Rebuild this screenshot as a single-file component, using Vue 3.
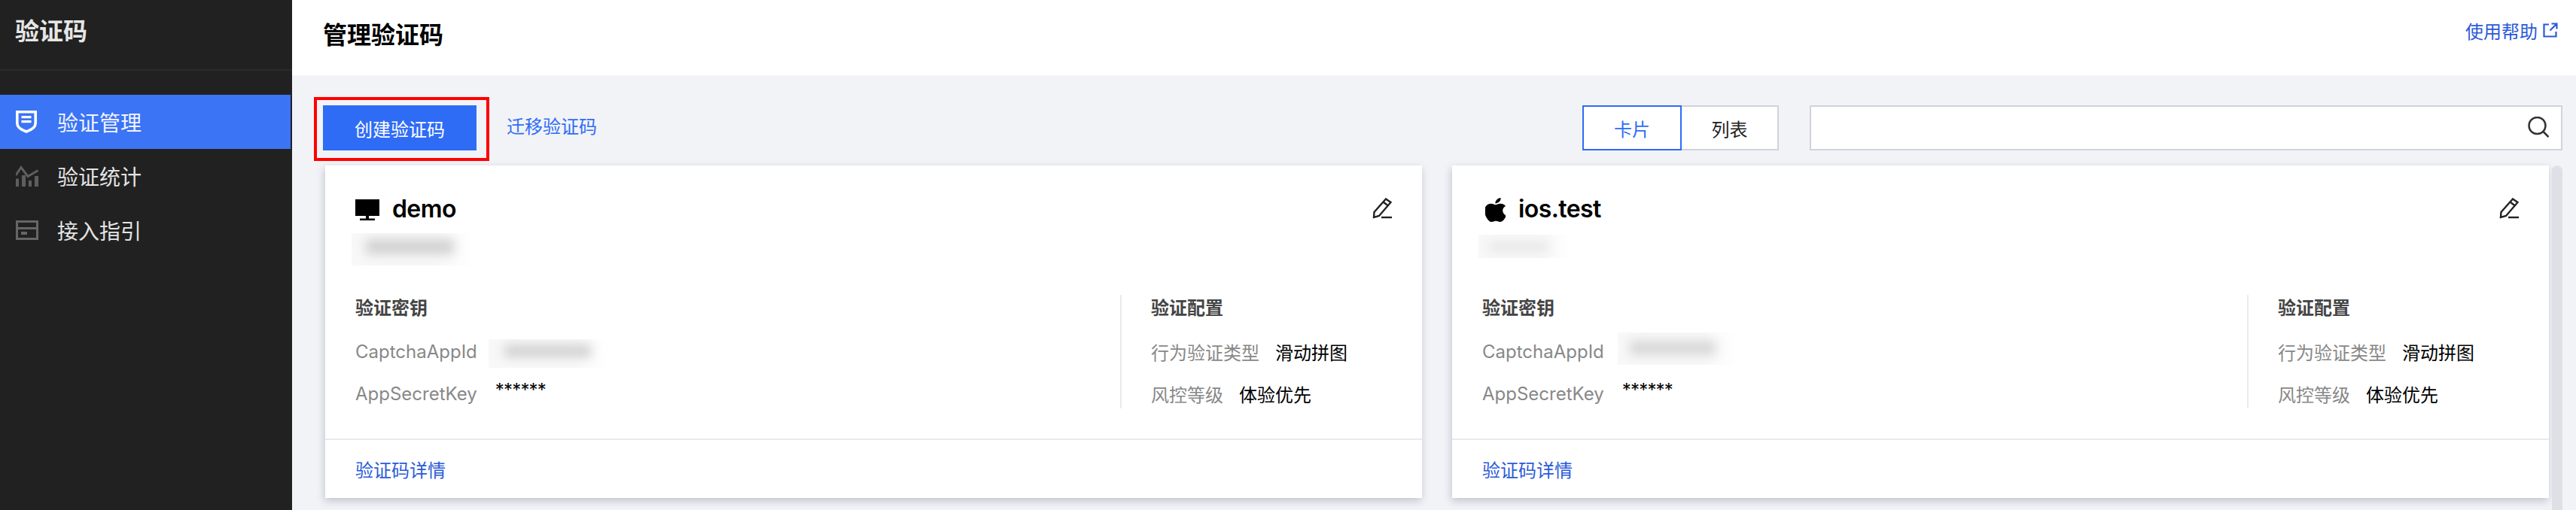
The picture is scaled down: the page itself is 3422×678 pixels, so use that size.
<script setup>
const nav = [
  { label: '验证管理', icon: 'shield', active: true },
  { label: '验证统计', icon: 'chart' },
  { label: '接入指引', icon: 'guide' }
]
const cards = [
  { name: 'demo', icon: 'monitor', sub: 'sub-a', app: 'app-a' },
  { name: 'ios.test', icon: 'apple', sub: 'sub-b', app: 'app-b' }
]
</script>

<template>
  <div class="page">
    <aside class="side">
      <div class="brand">验证码</div>
      <nav class="nav">
        <a v-for="n in nav" :key="n.label" class="nav-item" :class="{ active: n.active }">
          <span class="nav-ico">
            <svg v-if="n.icon === 'shield'" width="28" height="30" viewBox="0 0 28 30">
              <path fill="none" stroke="#fff" stroke-width="3.600" d="M1.800 1.800h24.400v15c0 5-5 8.800-12.200 11.200C6.800 25.600 1.800 21.800 1.800 16.800z" />
              <path fill="#fff" d="M7.500 7h13v3.200h-13zM7.500 13h13v3.200h-13z" />
            </svg>
            <svg v-else-if="n.icon === 'chart'" width="30" height="28" viewBox="0 0 30 28">
              <path fill="none" stroke="#5e5e5e" stroke-width="3" d="M0 13 7 2.500l9 12 13.500-8" />
              <path fill="#5e5e5e" d="M0 17.500h4V28H0zM8 13h5v15H8zM17 20h4v8h-4zM25 14h5v14h-5z" />
            </svg>
            <svg v-else width="30" height="26" viewBox="0 0 30 26">
              <path fill="#666" fill-rule="evenodd" d="M0 0h30v26H0zM3 3v6h24V3zm0 9v11h24V12zm4 3h8v4H7z" />
            </svg>
          </span>
          <span class="nav-label">{{ n.label }}</span>
        </a>
      </nav>
    </aside>

    <main class="main">
      <header class="top">
        <h1>管理验证码</h1>
        <a class="help">使用帮助
          <svg width="20" height="20" viewBox="0 0 20 20" fill="none" stroke="#2a5ad8" stroke-width="2.200">
            <path d="M8 2.500H1.500v16h16V12" />
            <path d="M11.500 1.500h7v7M18.500 1.500l-9 9" />
          </svg>
        </a>
      </header>

      <section class="body">
        <div class="tools">
          <div class="highlight">
            <button class="primary">创建验证码</button>
          </div>
          <a class="migrate">迁移验证码</a>
          <div class="seg">
            <span class="seg-on">卡片</span>
            <span class="seg-off">列表</span>
          </div>
          <div class="search">
            <svg width="30" height="30" viewBox="0 0 30 30" fill="none" stroke="#333" stroke-width="2.500">
              <circle cx="14.500" cy="12" r="11" />
              <path d="m22.500 20 7 7" />
            </svg>
          </div>
        </div>

        <div class="scroller">
          <div class="grid">
            <article v-for="c in cards" :key="c.name" class="card">
              <div class="card-top">
                <div class="title">
                  <svg v-if="c.icon === 'monitor'" class="ico-mon" width="32" height="28" viewBox="0 0 32 28">
                    <path d="M0 0h32v22H0zM14 22h4v3.500h-4zM6 25.500h20V28H6z" fill="#000" />
                  </svg>
                  <svg v-else class="ico-apple" width="27" height="32" viewBox="2.900 0 18.200 24" preserveAspectRatio="none">
                    <path fill="#000" d="M12.152 6.896c-.948 0-2.415-1.078-3.960-1.040-2.040.027-3.910 1.183-4.961 3.014-2.117 3.675-.546 9.103 1.519 12.090 1.013 1.454 2.208 3.090 3.792 3.039 1.520-.065 2.090-.987 3.935-.987 1.831 0 2.350.987 3.960.948 1.637-.026 2.676-1.480 3.676-2.948 1.156-1.688 1.636-3.325 1.662-3.415-.039-.013-3.182-1.221-3.220-4.857-.026-3.040 2.480-4.494 2.597-4.559-1.429-2.090-3.623-2.324-4.390-2.376-2-.156-3.675 1.090-4.610 1.090zM15.530 3.830c.843-1.012 1.400-2.427 1.245-3.830-1.207.052-2.662.805-3.532 1.818-.780.896-1.454 2.338-1.273 3.714 1.338.104 2.715-.688 3.559-1.701" />
                  </svg>
                  <span class="name">{{ c.name }}</span>
                </div>
                <svg class="pen" width="26" height="28" viewBox="0 0 26 28" fill="none" stroke="#222" stroke-width="2.400">
                  <path d="M18 1.500 24.500 6 9 24l-7 2 .5-7z" />
                  <path d="M14.500 5.500 21 10.500" />
                  <path d="M12 26h14" />
                </svg>
              </div>
              <div class="blur-slot sub" :class="c.sub"><i></i></div>
              <div class="info">
                <div class="col-left">
                  <h3>验证密钥</h3>
                  <div class="row">
                    <label>CaptchaAppId</label>
                    <div class="blur-slot app" :class="c.app"><i></i></div>
                  </div>
                  <div class="row">
                    <label>AppSecretKey</label>
                    <b class="stars">******</b>
                  </div>
                </div>
                <div class="col-right">
                  <h3>验证配置</h3>
                  <div class="row"><label>行为验证类型</label><b>滑动拼图</b></div>
                  <div class="row"><label>风控等级</label><b>体验优先</b></div>
                </div>
              </div>
              <div class="foot"><a>验证码详情</a></div>
            </article>
          </div>
          <div class="scrollbar"></div>
        </div>
      </section>
    </main>
  </div>
</template>

<style>
html, body { margin: 0; background: #f2f3f7; }
</style>

<style scoped>
.page {
  display: flex;
  width: 3422px;
  height: 678px;
  overflow: hidden;
  font-family: Inter, "Noto Sans CJK SC", sans-serif;
  font-size: 24px;
}
.side {
  width: 388px;
  flex: none;
  background: #212121;
  color: #e6e6e6;
}
.brand {
  height: 92px;
  padding-left: 20px;
  line-height: 84px;
  font-size: 32px;
  font-weight: 700;
  border-bottom: 2px solid #2b2b2b;
}
.nav { padding-top: 32px; }
.nav-item {
  display: flex;
  align-items: center;
  width: 386px;
  height: 72px;
  box-sizing: border-box;
  font-size: 28px;
  color: #e4e4e4;
}
.nav-ico {
  width: 76px;
  padding-left: 21px;
  box-sizing: border-box;
  display: flex;
  align-items: center;
  flex: none;
}
.nav-item.active { background: #3b74f5; color: #f2f5ff; }

.main {
  flex: 1;
  min-width: 0;
  display: flex;
  flex-direction: column;
  background: #f2f3f7;
}
.top {
  height: 100px;
  flex: none;
  background: #fff;
  display: flex;
  justify-content: space-between;
  padding: 0 24px 0 41px;
  box-sizing: border-box;
}
.top h1 {
  margin: 0;
  font-size: 32px;
  font-weight: 700;
  line-height: 94px;
  color: #000;
}
.help {
  display: flex;
  align-items: center;
  gap: 7px;
  height: 80px;
  color: #2a5ad8;
}
.body { flex: 1; min-height: 0; }
.tools {
  height: 120px;
  display: flex;
  align-items: flex-start;
  padding: 29px 18px 0 29px;
  box-sizing: border-box;
}
.highlight {
  padding: 7px 13px 10px 8px;
  border: 4px solid #f00;
  display: flex;
}
.primary {
  width: 204px;
  height: 60px;
  border: 0;
  background: #2f6cf6;
  color: #fff;
  font: inherit;
  padding: 0;
}
.migrate {
  margin: 10px 0 0 23px;
  line-height: 60px;
  color: #2f6cf6;
}
.seg {
  display: flex;
  margin: 11px 0 0 auto;
  height: 60px;
}
.seg span {
  display: flex;
  align-items: center;
  justify-content: center;
  box-sizing: border-box;
  background: #fff;
}
.seg-on {
  width: 132px;
  border: 2px solid #2f6cf6;
  color: #2f6cf6;
}
.seg-off {
  width: 129px;
  border: 2px solid #d0d3dc;
  border-left: 0;
  color: #222;
}
.search {
  width: 1000px;
  height: 60px;
  margin: 11px 0 0 41px;
  box-sizing: border-box;
  background: #fff;
  border: 2px solid #d0d3dc;
  display: flex;
  align-items: center;
  justify-content: flex-end;
  padding-right: 16px;
}
.scroller {
  display: flex;
  height: 458px;
  padding: 0 18px 0 44px;
  box-sizing: border-box;
  justify-content: space-between;
}
.grid {
  display: grid;
  grid-template-columns: 1457px 1457px;
  gap: 40px;
  align-items: start;
}
.scrollbar {
  width: 14px;
  background: #dfe0e5;
  border-radius: 7px 7px 0 0;
}
.card {
  height: 442px;
  background: #fff;
  box-shadow: -1px 4px 10px rgba(80, 90, 110, 0.3);
  display: flex;
  flex-direction: column;
}
.card-top {
  display: flex;
  justify-content: space-between;
  align-items: center;
  padding: 41px 40px 0;
  height: 32px;
}
.title {
  display: flex;
  align-items: center;
  gap: 17px;
  font-size: 32px;
  font-weight: 600;
  letter-spacing: -0.6px;
  color: #000;
}
.ico-mon { margin-top: 4px; }
.ico-apple { margin: 4px 0 0 4px; }
.blur-slot {
  position: relative;
  overflow: hidden;
  background: linear-gradient(to right, #f8f8f8 70%, #fff);
}
.blur-slot i {
  position: absolute;
  background: #d2d2d2;
  filter: blur(7px);
}
.sub {
  width: 163px;
  height: 43px;
  margin: 17px 0 0 35px;
}
.sub-a i { inset: 8px 27px 15px 19px; }
.sub-b { width: 123px; height: 31px; margin-top: 19px; }
.sub-b i { inset: 10px 30px 9px 14px; background: #e6e6e6; }
.info {
  display: flex;
  margin-top: 39px;
  height: 151px;
  padding-left: 40px;
}
.sub-b + .info { margin-top: 49px; }
.col-left { width: 1016px; }
.col-right {
  flex: 1;
  border-left: 2px solid #e9eaef;
  padding-left: 39px;
}
h3 {
  margin: 0 0 19px;
  font-size: 24px;
  line-height: 36px;
  font-weight: 700;
  color: #444;
}
.row {
  display: flex;
  align-items: center;
  height: 40px;
  gap: 21px;
}
.row + .row { margin-top: 16px; }
label { color: #888; }
.row b { font-weight: 400; color: #000; }
.row .stars {
  margin: 0 0 10px 3px;
  letter-spacing: -0.8px;
}
.app {
  width: 159px;
  height: 38px;
  margin: 6px 0 0 -6px;
}
.app-a i { inset: 7px 23px 14px 21px; }
.app-b {
  width: 160px;
  height: 43px;
  margin: -7px 0 0 -3px;
}
.app-b i { inset: 11px 30px 13px 16px; background: #d8d8d8; }
.foot {
  margin-top: auto;
  height: 77px;
  border-top: 2px solid #e9eaef;
  display: flex;
  align-items: center;
  padding-left: 40px;
  color: #2a5ad8;
}
</style>
